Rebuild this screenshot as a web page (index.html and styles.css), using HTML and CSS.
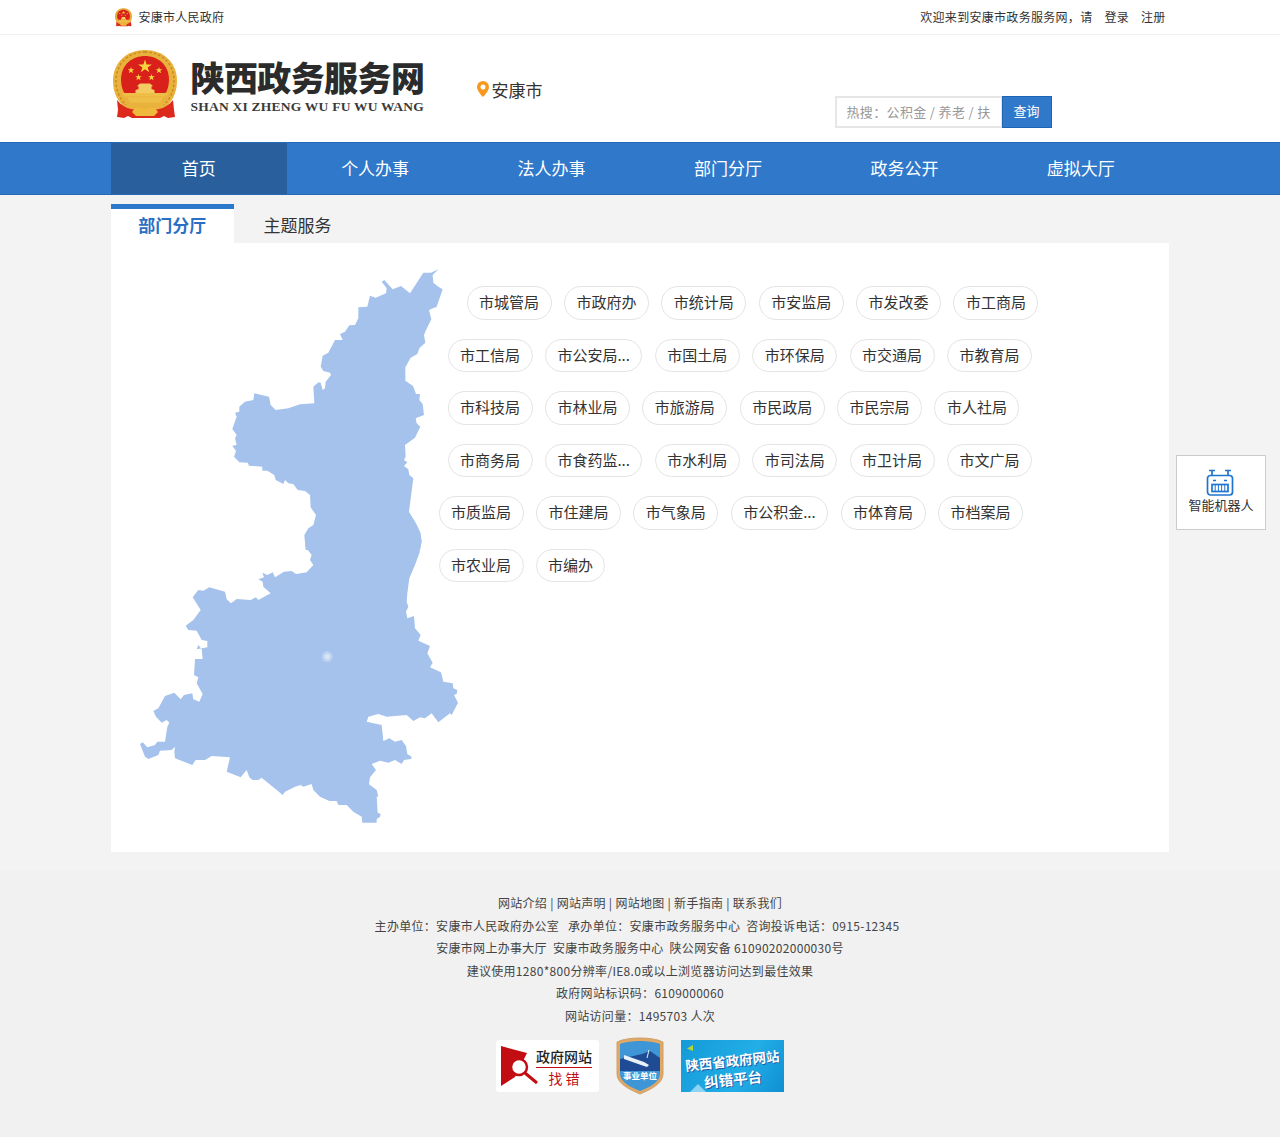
FILE: index.html
```html
<!DOCTYPE html>
<html lang="zh-CN">
<head>
<meta charset="utf-8">
<title>陕西政务服务网</title>
<link rel="stylesheet" href="styles.css">
</head>
<body>
<svg class="defs" width="0" height="0" aria-hidden="true">
  <defs>
    <symbol id="emblem" viewBox="0 0 64 70">
      <path d="M32 0C14 0 0 12 0 31c0 12 5 21 13 28h38c8-7 13-16 13-28C64 12 50 0 32 0z" fill="#e9b23c"/>
      <path d="M32 2C16 2 3 13 3 31c0 10 4 18 10 24" fill="none" stroke="#c98a22" stroke-width="1.500" stroke-dasharray="2.500 2"/>
      <path d="M32 2c16 0 29 11 29 29 0 10-4 18-10 24" fill="none" stroke="#c98a22" stroke-width="1.500" stroke-dasharray="2.500 2"/>
      <path d="M32 6C20 6 8 14 8 30c0 6 2 11 4 14h40c2-3 4-8 4-14C56 14 44 6 32 6z" fill="#d9201a"/>
      <path d="M32 9.500l1.600 4.900h5.200l-4.200 3 1.600 4.900-4.200-3-4.200 3 1.600-4.900-4.200-3h5.200z" fill="#f7d53e"/>
      <path d="M18 17l.8 2.300h2.500l-2 1.500.8 2.400-2.100-1.500-2.100 1.500.8-2.400-2-1.500h2.500zM46 17l.8 2.300h2.500l-2 1.500.8 2.400-2.100-1.500-2.100 1.500.8-2.400-2-1.500h2.500zM25.500 24l.8 2.300h2.500l-2 1.500.8 2.400-2.100-1.500-2.100 1.500.8-2.400-2-1.500h2.500zM38.500 24l.8 2.300h2.500l-2 1.500.8 2.400-2.100-1.500-2.100 1.500.8-2.400-2-1.500h2.500z" fill="#f7d53e"/>
      <path d="M24 36l3-2.500h10l3 2.500-1.500.6V39l3 1v3H22.500v-3l3-1v-2.400z" fill="#f3cb62"/>
      <path d="M9 43h46l-2.500 3.500h-41zM14 47.500h36l-3 5H17z" fill="#efbe46"/>
      <path d="M4 50c4 5 9 8 14 9 5 1 9 0 14 0s9 1 14 0c5-1 10-4 14-9l1 10 1 7-7 1-4-2-4 2H19l-4-2-4 2-7-1 1-7z" fill="#dd281c"/>
      <path d="M22 58c4-1 7 1 10 1s6-2 10-1l3 4-4 4H23l-4-4z" fill="#eeb93d"/>
    </symbol>
  </defs>
</svg>

<div class="topbar">
  <div class="wrap topbar-in">
    <div class="gov">
      <svg class="gov-icon"><use href="#emblem"/></svg>
      <span>安康市人民政府</span>
    </div>
    <div class="user">
      <span class="welcome">欢迎来到安康市政务服务网，请</span>
      <a>登录</a>
      <a>注册</a>
    </div>
  </div>
</div>

<header class="header">
  <div class="wrap header-in">
    <svg class="logo-mark"><use href="#emblem"/></svg>
    <div class="logo-text">
      <div class="logo-cn">陕西政务服务网</div>
      <div class="logo-en">SHAN XI ZHENG WU FU WU WANG</div>
    </div>
    <div class="place">
      <svg class="pin" viewBox="0 0 12 16"><path d="M6 0a6 6 0 0 0-6 6c0 4 6 10 6 10s6-6 6-10a6 6 0 0 0-6-6zm0 8.500A2.500 2.500 0 1 1 6 3.500a2.500 2.500 0 0 1 0 5z" fill="#f7981d"/></svg>
      <span>安康市</span>
    </div>
    <div class="search">
      <div class="search-input">热搜：公积金 / 养老 / 扶</div>
      <div class="search-btn">查询</div>
    </div>
  </div>
</header>

<nav class="nav">
  <div class="wrap nav-in">
    <a class="nav-item active">首页</a>
    <a class="nav-item">个人办事</a>
    <a class="nav-item">法人办事</a>
    <a class="nav-item">部门分厅</a>
    <a class="nav-item">政务公开</a>
    <a class="nav-item">虚拟大厅</a>
  </div>
</nav>

<main class="wrap main">
  <div class="tabs">
    <div class="tab on">部门分厅</div>
    <div class="tab">主题服务</div>
  </div>
  <section class="panel">
    <svg class="map" viewBox="0 0 1020 1710" aria-label="安康市地图">
      <g fill="#a5c2ec">
        <polygon points="925,28 908,45 910,68 925,80 938,88 920,140 897,150 904,178 887,212 882,225 886,248 868,265 862,282 842,293 826,322 826,362 849,378 858,402 870,402 868,420 878,432 882,465 857,475 860,490 871,500 855,533 825,555 827,590 822,600 832,607 822,618 835,628 838,645 850,655 837,755 858,790 872,820 875,845 870,870 527,870 523,825 535,805 550,795 558,765 542,742 540,705 525,693 503,690 490,672 475,670 465,660 460,672 437,660 433,645 412,632 397,632 397,620 357,617 353,608 328,607 312,590 318,573 307,557 320,555 315,535 320,525 307,507 320,470 315,458 328,455 328,440 345,425 370,420 373,400 395,405 417,410 422,435 437,450 475,445 510,433 553,430 550,380 565,367 572,368 578,390 585,385 587,365 603,345 600,338 580,333 572,320 578,287 595,278 615,240 638,240 630,222 645,215 658,196 675,195 685,175 685,142 712,140 720,107 737,113 768,100 770,85 755,65 763,60 788,88 813,78 840,100 880,38 903,38"/>
        <polygon transform="translate(0 840)" points="875,0 868,40 855,75 838,115 832,160 830,185 835,200 828,215 832,235 852,228 855,265 872,285 865,302 900,318 892,340 908,368 900,382 933,397 940,425 968,430 970,445 982,450 980,462 972,465 984,488 965,525 960,520 925,547 905,520 885,535 870,532 850,543 830,525 770,530 745,522 715,530 710,545 755,555 760,603 778,595 795,605 815,600 828,618 832,642 845,650 843,657 822,660 815,672 795,660 775,668 750,662 725,672 738,690 720,712 717,733 740,750 745,770 740,770 743,818 752,822 750,830 740,838 740,848 697,848 695,830 670,815 650,795 625,795 620,783 598,783 570,770 550,750 545,732 520,740 512,735 495,740 465,755 458,765 440,750 395,713 385,720 368,720 358,712 350,690 332,712 290,695 300,652 245,648 225,660 197,660 187,675 135,655 133,635 135,620 125,630 90,632 85,645 55,657 45,650 30,612 38,607 52,622 75,615 82,605 105,605 112,560 118,548 110,540 95,548 78,530 70,513 85,505 105,468 133,458 152,478 162,465 187,460 190,478 208,485 218,462 200,430 205,412 192,405 195,357 218,357 215,328 205,315 200,328 232,322 232,303 215,300 200,272 175,270 167,257 190,240 212,210 188,172 205,150 220,152 238,142 285,155 290,178 303,190 320,177 362,180 378,172 385,180 422,160 400,140 398,125 385,118 402,112 397,98 412,105 428,97 435,112 462,95 485,93 498,102 530,97 550,75 540,60 545,45 527,22 527,0"/>
      </g>
      <circle cx="592" cy="1190" r="16" fill="#fff" fill-opacity=".28"/>
      <circle cx="592" cy="1190" r="8" fill="#fff" fill-opacity=".4"/>
    </svg>
    <div class="tags">
      <div class="row r1">
        <a class="tag">市城管局</a><a class="tag">市政府办</a><a class="tag">市统计局</a><a class="tag">市安监局</a><a class="tag">市发改委</a><a class="tag">市工商局</a>
      </div>
      <div class="row r2">
        <a class="tag">市工信局</a><a class="tag long">市公安局...</a><a class="tag">市国土局</a><a class="tag">市环保局</a><a class="tag">市交通局</a><a class="tag">市教育局</a>
      </div>
      <div class="row r2">
        <a class="tag">市科技局</a><a class="tag">市林业局</a><a class="tag">市旅游局</a><a class="tag">市民政局</a><a class="tag">市民宗局</a><a class="tag">市人社局</a>
      </div>
      <div class="row r2">
        <a class="tag">市商务局</a><a class="tag long">市食药监...</a><a class="tag">市水利局</a><a class="tag">市司法局</a><a class="tag">市卫计局</a><a class="tag">市文广局</a>
      </div>
      <div class="row r3">
        <a class="tag">市质监局</a><a class="tag">市住建局</a><a class="tag">市气象局</a><a class="tag long">市公积金...</a><a class="tag">市体育局</a><a class="tag">市档案局</a>
      </div>
      <div class="row r3">
        <a class="tag">市农业局</a><a class="tag short">市编办</a>
      </div>
    </div>
  </section>
</main>

<aside class="robot">
  <svg class="robot-icon" viewBox="0 0 28 27">
    <g fill="none" stroke="#1f74cf" stroke-width="1.700">
      <rect x="1.500" y="6.500" width="25" height="19.500" rx="3"/>
      <path d="M6 6.500V2M22 6.500V2M3 1.500h6M19 1.500h6"/>
      <path d="M7 11.500h3M18 11.500h3" stroke-width="1.300"/>
      <rect x="6" y="15.500" width="16" height="7"/>
      <path d="M9.200 15.500v7M12.400 15.500v7M15.600 15.500v7M18.800 15.500v7" stroke-width="1"/>
    </g>
  </svg>
  <span>智能机器人</span>
</aside>

<footer class="footer">
  <p>网站介绍 | 网站声明 | 网站地图 | 新手指南 | 联系我们</p>
  <p>主办单位：安康市人民政府办公室&nbsp;&nbsp; 承办单位：安康市政务服务中心&nbsp; 咨询投诉电话：0915-12345&nbsp;&nbsp;</p>
  <p>安康市网上办事大厅&nbsp;&nbsp;安康市政务服务中心&nbsp;&nbsp;陕公网安备 61090202000030号</p>
  <p>建议使用1280*800分辨率/IE8.0或以上浏览器访问达到最佳效果</p>
  <p>政府网站标识码：6109000060</p>
  <p>网站访问量：1495703 人次</p>
  <div class="badges">
    <div class="badge-find">
      <svg class="find-mark" viewBox="0 0 37 42">
        <path d="M0 0l26 7-12 24L0 40z" fill="#c20d12"/>
        <circle cx="18" cy="21" r="8" fill="#fff" stroke="#c20d12" stroke-width="2.500"/>
        <path d="M24 27l12 10" stroke="#c20d12" stroke-width="3"/>
      </svg>
      <div class="find-text">
        <span class="find-top">政府网站</span>
        <span class="find-bot">找 错</span>
      </div>
    </div>
    <svg class="badge-shield" viewBox="0 0 50 58">
      <path d="M25 1c8 0 17 1 23 4v32c0 9-11 15-23 20C13 52 2 46 2 37V5C8 2 17 1 25 1z" fill="#e0a864" stroke="#cfa06a"/>
      <path d="M25 4c7 0 15 1 20 3v30c0 8-10 13-20 17C15 50 5 45 5 37V7c5-2 13-3 20-3z" fill="#3f96d6"/>
      <path d="M5 22l22-5 8-3 10 7v13H5z" fill="#1f4a94"/>
      <path d="M9 18l20 7 5 3-2 2-6-2-17-6z" fill="#e8f1f7"/>
      <path d="M34 13l-2 8" stroke="#e8f1f7"/>
      <text x="25" y="42" class="shield-text">事业单位</text>
    </svg>
    <div class="badge-platform">
      <span class="plat-top">陕西省政府网站</span>
      <span class="plat-bot">纠错平台</span>
    </div>
  </div>
</footer>
</body>
</html>
```

FILE: styles.css
```css
* { box-sizing: border-box; }
html, body { margin: 0; padding: 0; }
body {
  background: #f3f3f3;
  color: #333;
  font-family: "Noto Sans CJK SC", "Liberation Sans", sans-serif;
  font-size: 12px;
  height: 1137px;
  overflow: hidden;
  position: relative;
}
a { color: inherit; text-decoration: none; }
.defs { position: absolute; }
.wrap { width: 1059px; margin: 0 auto; }

.topbar { height: 35px; background: #fff; border-bottom: 1px solid #f2f2f2; letter-spacing: .25px; }
.topbar-in { height: 32px; display: flex; justify-content: space-between; align-items: center; padding-right: 4px; }
.gov { display: flex; align-items: center; gap: 7px; padding-left: 4px; }
.gov-icon { width: 17px; height: 19px; margin-top: 2px; }
.user { display: flex; gap: 12px; }
.welcome { letter-spacing: .3px; }

.header { height: 107px; background: #fff; }
.header-in { height: 107px; display: flex; position: relative; padding-left: 2px; }
.logo-mark { width: 64px; height: 70px; margin-top: 15px; flex: none; }
.logo-text { margin-left: 14px; width: 236px; flex: none; padding-top: 19px; }
.logo-cn { font-size: 34px; line-height: 45px; font-weight: 900; color: #2b2b2b; letter-spacing: -.6px; white-space: nowrap; }
.logo-en { font-family: "Liberation Serif", serif; font-weight: 700; font-size: 13.500px; line-height: 15px; color: #3a3a3a; white-space: nowrap; letter-spacing: .23px; }
.place { display: flex; align-items: center; gap: 3px; margin-left: 50px; font-size: 17px; color: #333; height: 24px; margin-top: 42px; }
.pin { width: 12px; height: 16px; }
.search { display: flex; margin-left: 292px; margin-top: 61px; height: 32px; }
.search-input { width: 167px; height: 32px; border: 2px solid #e6e6e6; border-right-width: 1px; color: #999; font-size: 13px; line-height: 27px; padding-left: 10px; white-space: nowrap; overflow: hidden; letter-spacing: .35px; }
.search-btn { width: 50px; height: 32px; background: #3078c9; border: 1px solid #1f63b3; color: #fff; font-size: 13px; line-height: 27px; text-align: center; }

.nav { height: 53px; background: #3079ca; border-top: 1px solid #2768b4; border-bottom: 1px solid #2768b4; }
.nav-in { display: flex; height: 51px; padding-right: .5px; }
.nav-item { flex: 1; color: #fff; font-size: 17px; line-height: 50px; text-align: center; }
.nav-item.active { background: #2a5f9e; }

.main { padding-top: 9px; }
.tabs { display: flex; height: 39px; }
.tab { width: 127px; font-size: 17px; line-height: 42px; text-align: center; color: #333; }
.tab.on { width: 123.500px; background: #fff; color: #2a6fc4; font-weight: 700; border-top: 5px solid #2b78cc; line-height: 32px; }
.panel { width: 1058.500px; height: 609px; background: #fff; display: flex; }
.map { width: 340px; height: 570px; margin-left: 19px; margin-top: 17px; flex: none; }
.tags { margin-left: -31px; padding-top: 43px; display: flex; flex-direction: column; gap: 19.100px; position: relative; }
.row { display: flex; gap: 12.400px; }
.r1 { margin-left: 28px; }
.r2 { margin-left: 9px; }
.r3 { margin-left: 0; }
.tag { width: 85px; height: 33.500px; border: 1px solid #e4e4e4; border-radius: 17px; background: #fff; font-size: 15px; line-height: 29px; text-align: center; color: #333; white-space: nowrap; }
.tag.long { width: 97.500px; }
.tag.short { width: 69px; }

.robot { position: absolute; left: 1176px; top: 455px; width: 90px; height: 75px; background: #fff; border: 1px solid #ccc; display: flex; flex-direction: column; align-items: center; padding-top: 13px; font-size: 13px; color: #333; }
.robot-icon { width: 28px; height: 27px; margin-right: 2px; }
.robot span { line-height: 18px; }

.footer { position: absolute; left: 0; right: 0; top: 870px; bottom: 0; background: #f1f1f1; padding-top: 22px; text-align: center; color: #444; }
.footer p { margin: 0; line-height: 22.500px; height: 22.500px; letter-spacing: .3px; }
.badges { display: flex; justify-content: center; align-items: center; gap: 16px; margin-top: 9px; height: 60px; }
.badge-find { width: 103px; height: 52px; background: #fff; border-radius: 3px; display: flex; padding: 6px 5px 0 5px; }
.find-mark { width: 37px; height: 42px; flex: none; margin-right: -3px; }
.find-text { display: flex; flex-direction: column; align-items: center; width: 58px; }
.find-top { font-size: 14px; line-height: 20px; color: #222; font-weight: 500; white-space: nowrap; border-bottom: 1px solid #c20d12; padding-bottom: 1px; }
.find-bot { font-size: 14px; line-height: 20px; color: #c20d12; white-space: nowrap; }
.badge-shield { width: 50px; height: 58px; }
.shield-text { fill: #fff; font-size: 8.500px; font-weight: 700; text-anchor: middle; }
.badge-platform { width: 103px; height: 52px; background: linear-gradient(120deg, #149ad8, #22aee6 60%, #0f8fd3); color: #fff; font-weight: 700; display: flex; flex-direction: column; align-items: center; overflow: hidden; padding-top: 11px; position: relative; }
.badge-platform::before { content: ""; position: absolute; left: 6px; top: 5px; width: 6px; height: 6px; background: #b7d53a; clip-path: polygon(100% 0, 100% 100%, 0 60%); }
.badge-platform::after { content: ""; position: absolute; left: 9px; bottom: 0; width: 16px; height: 8px; background: #8ed4f2; clip-path: polygon(50% 0, 100% 100%, 0 100%); }
.plat-top { font-size: 13.500px; line-height: 18px; white-space: nowrap; transform: rotate(-6deg); text-shadow: 1px 1px 0 #1d5ba8; }
.plat-bot { font-size: 14.500px; line-height: 20px; white-space: nowrap; transform: rotate(-6deg); text-shadow: 1px 1px 0 #1d5ba8; }
```
